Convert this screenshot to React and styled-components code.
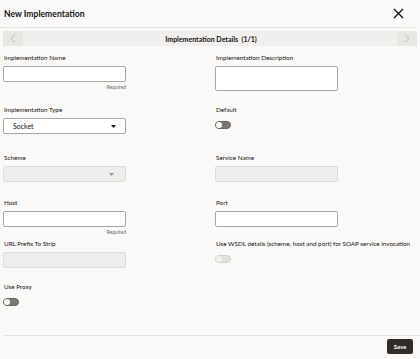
import styled, { createGlobalStyle } from "styled-components";

const GlobalStyle = createGlobalStyle`
    html, body {
        margin: 0;
        padding: 0;
        background: #FAF9F8;
    }
    * {
        box-sizing: border-box;
    }
`;

function Caret({ disabled }) {
    return (
        <svg width="5" height="3" viewBox="0 0 5 3">
            <path d="M0 0 L5 0 L2.5 3 Z" fill={disabled ? "#9a9794" : "#161513"} />
        </svg>
    );
}

function Chevron({ dir }) {
    return (
        <svg width="6" height="9" viewBox="0 0 6 9">
            <path
                d={dir === "left" ? "M5 0.5 L1 4.5 L5 8.5" : "M1 0.5 L5 4.5 L1 8.5"}
                fill="none"
                stroke="#b9b6b2"
                strokeWidth="1"
            />
        </svg>
    );
}

function Field({ label, children, hint }) {
    return (
        <FieldBox>
            <Label>{label}</Label>
            {children}
            {hint && <Hint>{hint}</Hint>}
        </FieldBox>
    );
}

export default function App() {
    return (
        <Dialog>
            <GlobalStyle />
            <Header>
                <h1>New Implementation</h1>
                <CloseButton aria-label="Close">
                    <svg width="11" height="11" viewBox="0 0 11 11">
                        <path d="M1 1 L10 10 M10 1 L1 10" stroke="#161513" strokeWidth="1.4" />
                    </svg>
                </CloseButton>
            </Header>

            <NavBar>
                <NavButton><Chevron dir="left" /></NavButton>
                <span>Implementation Details&nbsp;&nbsp;(1/1)</span>
                <NavButton><Chevron dir="right" /></NavButton>
            </NavBar>

            <Form>
                <Row $after={15}>
                    <Field label="Implementation Name" hint="Required">
                        <Input />
                    </Field>
                    <Field label="Implementation Description">
                        <Input $tall />
                    </Field>
                </Row>
                <Row $after={20}>
                    <Field label="Implementation Type">
                        <Select>
                            <span>Socket</span>
                            <Caret />
                        </Select>
                    </Field>
                    <Field label="Default">
                        <Toggle />
                    </Field>
                </Row>
                <Row $after={17}>
                    <Field label="Scheme">
                        <Select $disabled>
                            <span></span>
                            <Caret disabled />
                        </Select>
                    </Field>
                    <Field label="Service Name">
                        <Input $disabled />
                    </Field>
                </Row>
                <Row $after={5}>
                    <Field label="Host" hint="Required">
                        <Input />
                    </Field>
                    <Field label="Port">
                        <Input />
                    </Field>
                </Row>
                <Row $after={15}>
                    <Field label="URL Prefix To Strip">
                        <Input $disabled />
                    </Field>
                    <Field label="Use WSDL details (scheme, host and port) for SOAP service invocation">
                        <Toggle $disabled />
                    </Field>
                </Row>
                <Row>
                    <Field label="Use Proxy">
                        <Toggle />
                    </Field>
                </Row>
            </Form>

            <Footer>
                <SaveButton>Save</SaveButton>
            </Footer>
        </Dialog>
    );
}

const Dialog = styled.div`
    width: 420px;
    height: 359px;
    display: flex;
    flex-direction: column;
    background: #FAF9F8;
    color: #161513;
    font-family: 'Lato', 'Open Sans', sans-serif;
    overflow: hidden;
`;

const Header = styled.div`
    height: 28px;
    display: flex;
    align-items: center;
    justify-content: space-between;
    padding: 0 11px 0 4px;
    border-bottom: 1px solid #E6E4E1;
    margin-right: 5px;
    h1 {
        margin: 0;
        font-size: 8.6px;
        font-weight: 700;
    }
`;

const CloseButton = styled.div`
    display: flex;
    align-items: center;
    justify-content: center;
    width: 11px;
    height: 11px;
`;

const NavBar = styled.div`
    height: 15px;
    margin: 3px 3px 0 3px;
    display: flex;
    align-items: center;
    justify-content: space-between;
    background: #F1EFED;
    span {
        font-size: 7px;
        font-weight: 700;
        padding-left: 2px;
    }
`;

const NavButton = styled.div`
    width: 20px;
    height: 15px;
    display: flex;
    align-items: center;
    justify-content: center;
    background: #E9E7E4;
`;

const Form = styled.div`
    display: flex;
    flex-direction: column;
    padding: 8px 0 0 3px;
`;

const Row = styled.div`
    display: grid;
    grid-template-columns: 123px 123px;
    column-gap: 89px;
    align-items: start;
    margin-bottom: ${(p) => p.$after || 0}px;
`;

const FieldBox = styled.div`
    display: flex;
    flex-direction: column;
`;

const Label = styled.div`
    font-size: 6.3px;
    line-height: 8px;
    height: 8px;
    margin: 0 0 4px 1px;
    white-space: nowrap;
    color: #161513;
`;

const Input = styled.div`
    height: ${(p) => (p.$tall ? 25 : 16)}px;
    background: ${(p) => (p.$disabled ? "#EFEDEB" : "#FFFFFF")};
    border: 1px solid ${(p) => (p.$disabled ? "#DEDBD8" : "#A9A6A2")};
    border-radius: 2px;
`;

const Select = styled.div`
    height: 16px;
    display: flex;
    align-items: center;
    justify-content: space-between;
    padding: 0 ${(p) => (p.$disabled ? 11 : 9)}px 0 9px;
    background: ${(p) => (p.$disabled ? "#EFEDEB" : "#FFFFFF")};
    border: 1px solid ${(p) => (p.$disabled ? "#DEDBD8" : "#A9A6A2")};
    border-radius: 2px;
    span {
        font-size: 7px;
        color: #161513;
    }
`;

const Hint = styled.div`
    margin-top: 2px;
    height: 6px;
    line-height: 6px;
    font-size: 5px;
    text-align: right;
    color: #6F6C69;
`;

const Toggle = styled.div`
    position: relative;
    width: 16px;
    height: 8px;
    margin-top: 3px;
    border-radius: 4px;
    background: ${(p) => (p.$disabled ? "#E3E1DE" : "#7B7874")};
    border: 1px solid ${(p) => (p.$disabled ? "#D6D3CF" : "#6A6763")};
    &::after {
        content: "";
        position: absolute;
        left: 0;
        top: 0;
        width: 6px;
        height: 6px;
        border-radius: 50%;
        background: ${(p) => (p.$disabled ? "#F3F2F0" : "#FFFFFF")};
    }
`;

const Footer = styled.div`
    margin: auto 0 0 3px;
    height: 24px;
    border-top: 1px solid #E6E4E1;
    display: flex;
    justify-content: flex-end;
    align-items: flex-start;
    padding: 3px 7px 0 0;
`;

const SaveButton = styled.div`
    width: 26px;
    height: 15px;
    display: flex;
    align-items: center;
    justify-content: center;
    background: #312D2A;
    border-radius: 2px;
    color: #FFFFFF;
    font-size: 6px;
    font-weight: 700;
`;
